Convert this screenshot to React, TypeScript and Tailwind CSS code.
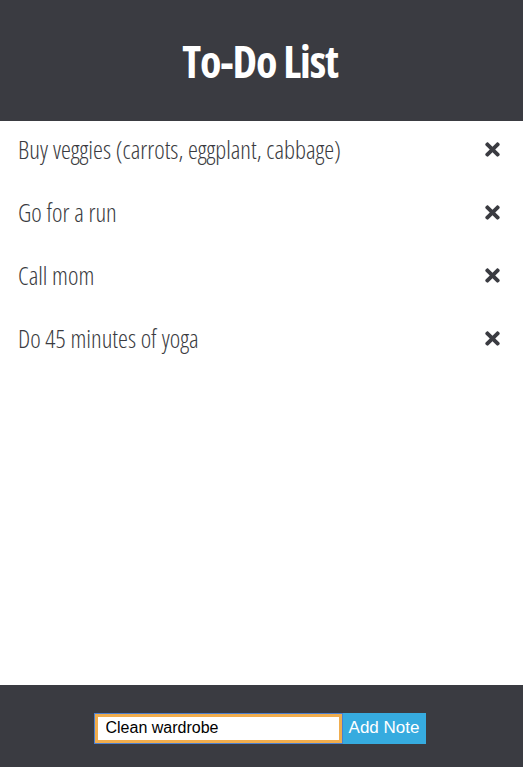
import { useState } from "react"
import { FaTimes } from "react-icons/fa"

const initial = [
  "Buy veggies (carrots, eggplant, cabbage)",
  "Go for a run",
  "Call mom",
  "Do 45 minutes of yoga",
]

export default function App() {
  const [notes, setNotes] = useState(initial)
  const [text, setText] = useState("Clean wardrobe")

  const add = () => {
    if (!text.trim()) return
    setNotes([...notes, text])
    setText("")
  }

  return (
    <div className="flex flex-col h-[767px] bg-white font-['Open_Sans',sans-serif]">
      <header className="h-[121px] bg-[#3a3b41] flex items-center justify-center">
        <h1 className="text-white text-[44px] font-bold [font-stretch:75%] tracking-tight leading-none mr-[3px]">To-Do List</h1>
      </header>

      <ul className="flex-1">
        {notes.map((n, i) => (
          <li key={i} className="flex items-center justify-between h-[63px] pb-[6px] pl-[18px] pr-[20px]">
            <span className="text-[#3a3b41] text-[25px] font-light [font-stretch:75%] leading-none">{n}</span>
            <button
              onClick={() => setNotes(notes.filter((_, j) => j !== i))}
              className="text-[#3a3b41]"
            >
              <FaTimes size={21} />
            </button>
          </li>
        ))}
      </ul>

      <footer className="h-[82px] bg-[#3a3b41] flex items-center justify-center pt-[4px]">
        <div className="flex items-center ml-[-3px]">
          <input
            value={text}
            onChange={(e) => setText(e.target.value)}
            className="w-[247px] h-[29px] border-[3px] border-[#f0ad4e] outline outline-1 outline-offset-0 outline-[#4a7fd0] bg-white px-[8px] text-[16px] text-black font-['Liberation_Sans',sans-serif]"
          />
          <button onClick={add} className="ml-[1px] h-[31px] w-[83px] bg-[#36abdf] text-white text-[17px] font-['Liberation_Sans',sans-serif]">
            Add Note
          </button>
        </div>
      </footer>
    </div>
  )
}
